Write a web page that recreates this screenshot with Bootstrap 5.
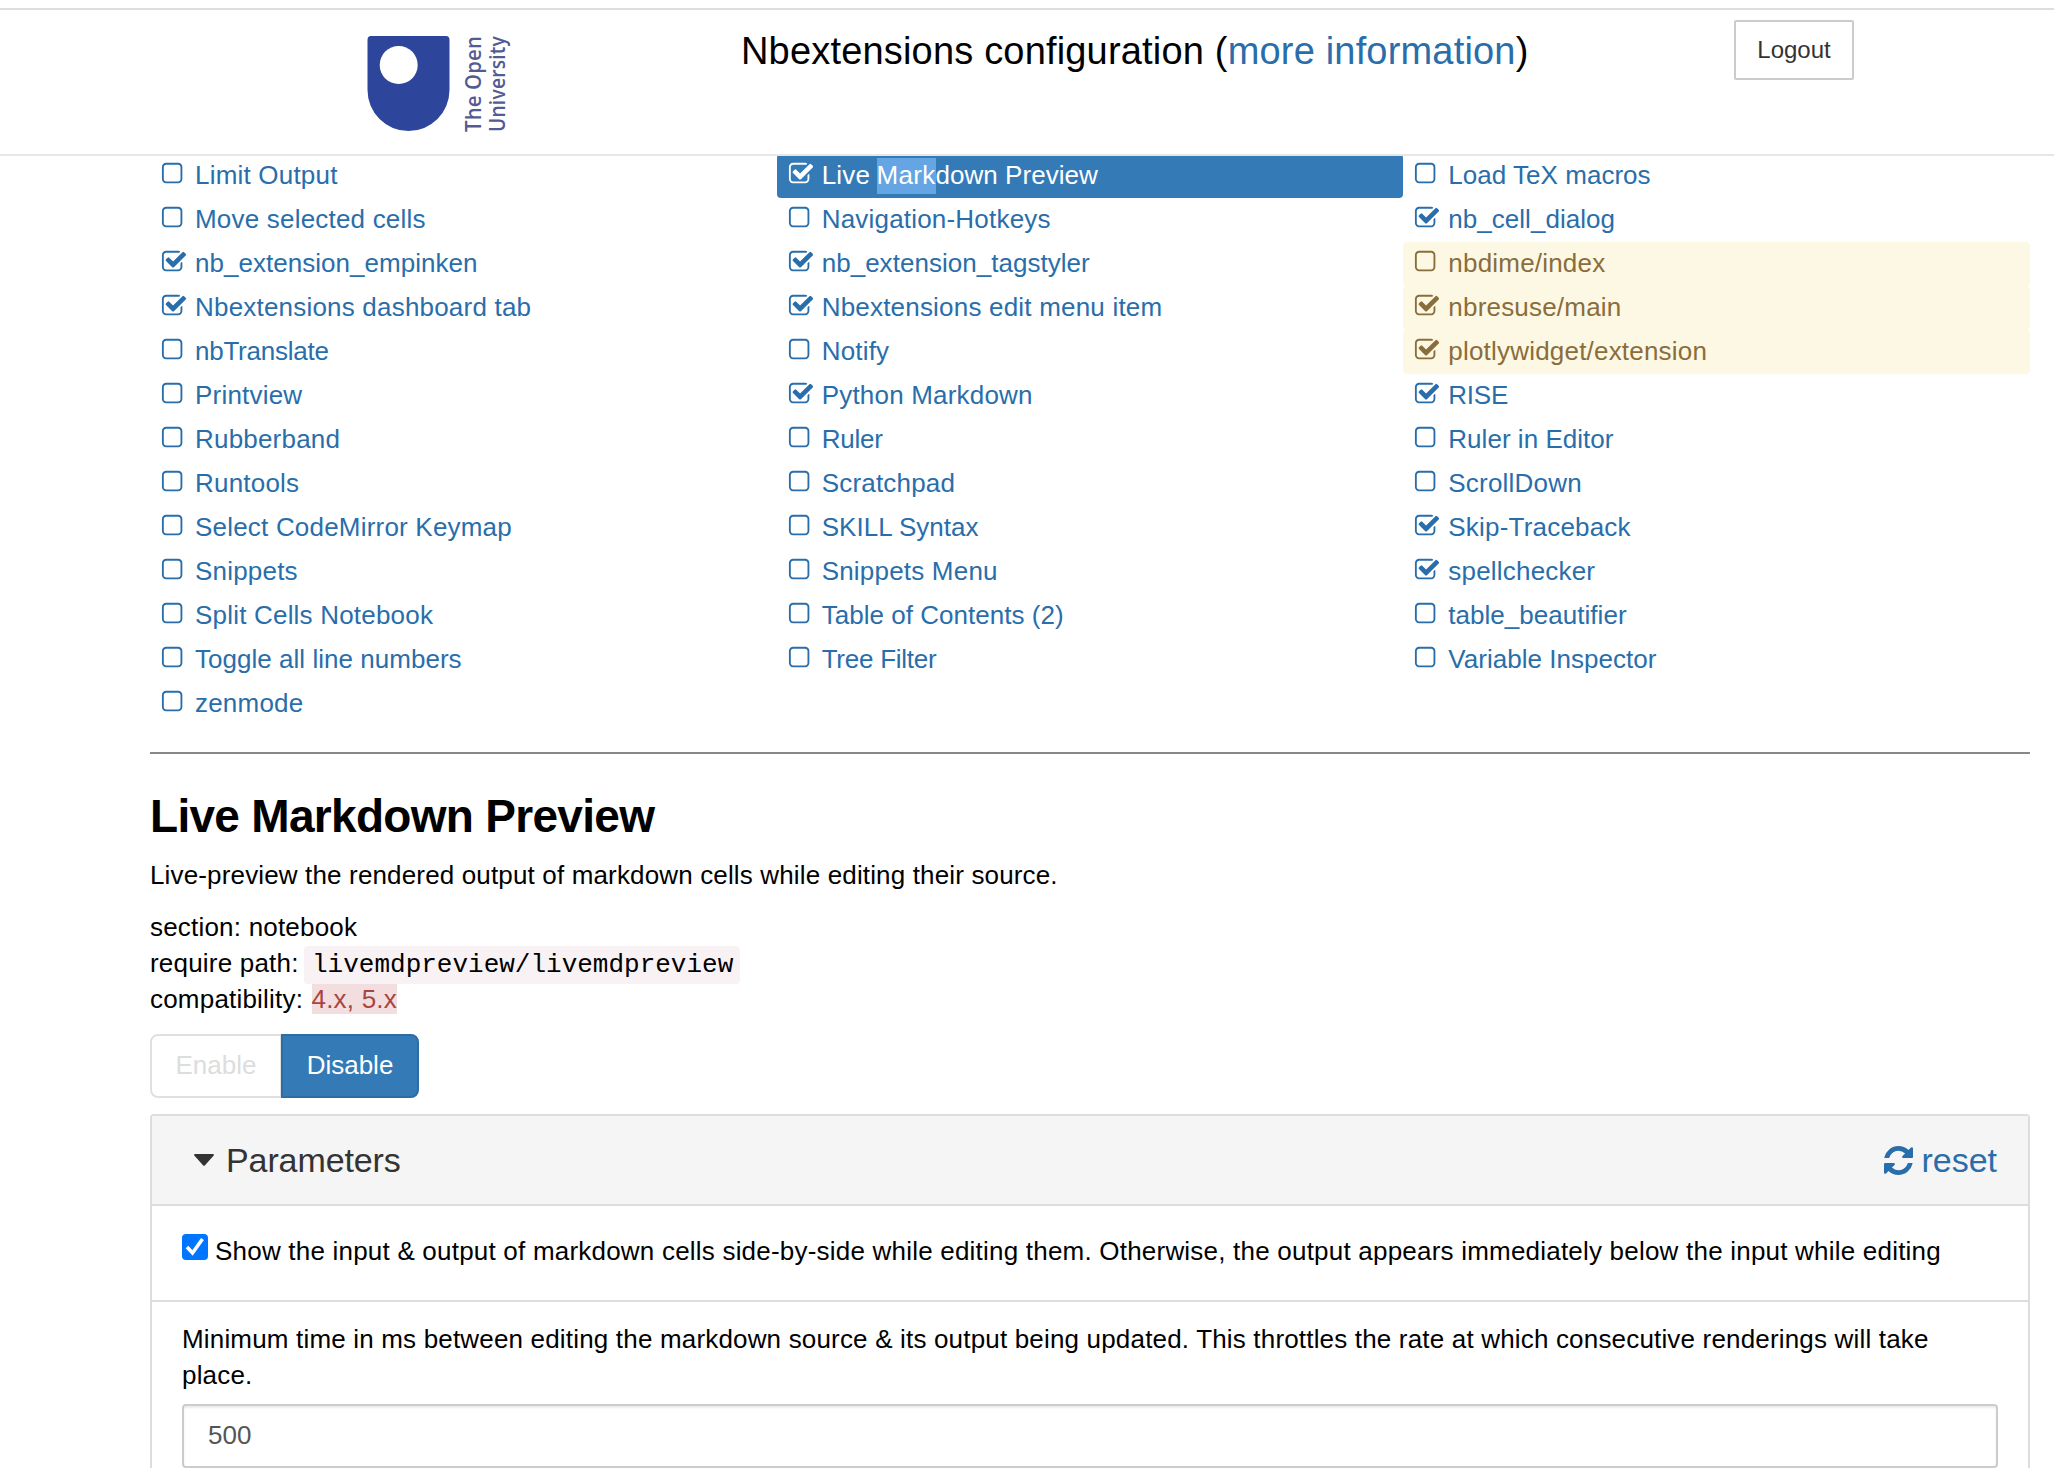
<!DOCTYPE html>
<html lang="en">
<head>
<meta charset="utf-8">
<title>Nbextensions configuration</title>
<link rel="stylesheet" href="https://cdn.jsdelivr.net/npm/bootstrap@5.3.0/dist/css/bootstrap.min.css">
<style>
body{font:26px/36px "Liberation Sans",Arial,sans-serif;color:#000;background:#fff;letter-spacing:.2px;height:1468px;overflow:hidden}
a{color:#296eaa;text-decoration:none}
.site-header{height:148px;margin-top:8px;border-top:2px solid #dcdce1;border-bottom:2px solid #e7e7e7;z-index:2}
.brand-logo{margin:14px 0 0 356px;width:166px;height:120px;overflow:visible}
.page-title{font-size:38px;line-height:44px;margin:19px 0 0 219px;width:993px;font-weight:400;letter-spacing:.18px;color:#000}
.logout-btn{--bs-btn-border-color:#ccc;--bs-btn-color:#333;--bs-btn-border-radius:2px;--bs-btn-border-width:2px;width:120px;height:60px;margin-top:10px;font-size:24px;line-height:34px;padding:0 0 1px;letter-spacing:0}
.page-body{width:1880px;margin-left:150px}
.ext-list{margin-top:-2px}
.ext-link{height:44px;line-height:42px;padding-left:11px;border-radius:4px}
.ext-link svg{width:26px;height:26px;margin:7.4px 8px 0 0;fill:currentColor;flex:none}
.ext-link.active{background:#337ab7;color:#fff}
.ext-link.unconfigurable{background:#fcf8e3;color:#8a6d3b}
.snug{letter-spacing:.03px}
.snugger{letter-spacing:-.25px}
.picked{background:#66a5e3;display:inline-block;height:36px;line-height:34px;margin:4px 0 0 -1px;letter-spacing:.3px}
.divider{height:2px;background:#888;margin-top:26px}
.ext-title{font-size:46px;line-height:52px;font-weight:700;letter-spacing:-.7px;margin:36px 0 0}
.ext-desc{margin:15px 0 16px;letter-spacing:.15px}
.path-code{background:#f9f2f4;color:#000;font:26px/30px "Liberation Mono",monospace;border-radius:4px;padding:4px 7px 4px 8px;margin-left:-2px;letter-spacing:0}
.compat{background:#f2dede;color:#a94442;margin-left:1px}
.toggle-btns{margin-top:17px}
.toggle-btns .btn{font-size:26px;line-height:36px;height:64px;padding:0 0 2px;border-width:2px;letter-spacing:0}
.btn-enable,.btn-enable:disabled{width:132px;border-color:#e0e0e0;color:#ddd;opacity:1;background:#fff;border-radius:8px}
.toggle-btns .btn-disable{width:138px;margin-left:-2px;background:#337ab7;border-color:#2e6da4;color:#fff;border-radius:8px}
.params{border:2px solid #ddd;border-radius:4px 4px 0 0;margin-top:16px;height:400px}
.params-head{height:90px;background:#f5f5f5;border-bottom:2px solid #ddd;font-size:34px;line-height:40px;padding:0 31px 0 42px;color:#333;letter-spacing:0}
.params-head svg{fill:currentColor}
.params-name{margin-left:12px;letter-spacing:-.1px}
.reset-icon{margin-right:8px}
.param-check{height:96px;border-bottom:2px solid #ddd;padding:26px 30px 0}
.tick-box{width:26px;height:26px;background:#0075ff;border-radius:4px;margin:2px 7px 0 0;flex:none}
.check-text{margin-top:1px;letter-spacing:.21px}
.param-num{padding:19px 30px 0;letter-spacing:.175px}
.num-input{height:64px;border:2px solid #ccc;border-radius:4px;margin-top:11px;padding:0 24px 2px;font-size:26px;letter-spacing:0;color:#555;box-shadow:inset 0 2px 2px rgba(0,0,0,.075)}
</style>
<script src="https://cdn.jsdelivr.net/npm/bootstrap@5.3.0/dist/js/bootstrap.bundle.min.js"></script>
</head>
<body>
<svg width="0" height="0" class="position-absolute">
<symbol id="off" viewBox="128 0 1792 1792"><path d="M1312 256h-832q-66 0-113 47t-47 113v832q0 66 47 113t113 47h832q66 0 113-47t47-113v-832q0-66-47-113t-113-47zm288 160v832q0 119-84.5 203.5t-203.5 84.5h-832q-119 0-203.5-84.5t-84.5-203.5v-832q0-119 84.5-203.5t203.5-84.5h832q119 0 203.5 84.5t84.5 203.5z"/></symbol>
<symbol id="on" viewBox="0 0 1792 1792"><path d="M1472 930v318q0 119-84.5 203.5t-203.5 84.5h-832q-119 0-203.5-84.5t-84.5-203.5v-832q0-119 84.5-203.5t203.5-84.5h832q63 0 117 25 15 7 18 23 3 17-9 29l-49 49q-10 10-23 10-3 0-9-2-23-6-45-6h-832q-66 0-113 47t-47 113v832q0 66 47 113t113 47h832q66 0 113-47t47-113v-254q0-13 9-22l64-64q10-10 23-10 6 0 12 3 20 8 20 29zm231-489l-814 814q-24 24-57 24t-57-24l-430-430q-24-24-24-57t24-57l110-110q24-24 57-24t57 24l263 263 647-647q24-24 57-24t57 24l110 110q24 24 24 57t-24 57z"/></symbol>
</svg>
<header class="site-header d-flex align-items-start bg-white position-relative">
<svg class="brand-logo" viewBox="356 24 166 120">
<path fill="#2d469b" d="M371 36H446Q449.500 36 449.500 40V90A41 41 0 0 1 367.500 90V40Q367.500 36 371 36Z"/>
<circle cx="398.700" cy="65" r="19" fill="#fff"/>
<g fill="#525b94" font-family="'Open Sans',sans-serif" font-weight="600" font-size="21">
<text transform="translate(480.500 132) rotate(-90)" textLength="96" lengthAdjust="spacingAndGlyphs">The Open</text>
<text transform="translate(505 132) rotate(-90)" textLength="96" lengthAdjust="spacingAndGlyphs">University</text>
</g>
</svg>
<h1 class="page-title">Nbextensions configuration (<a href="#">more information</a>)</h1>
<button class="btn logout-btn" type="button">Logout</button>
</header>
<main class="page-body">
<nav class="ext-list row row-cols-3 g-0">
<a href="#" class="col ext-link d-flex"><svg><use href="#off"/></svg>Limit Output</a>
<a href="#" class="col ext-link d-flex active"><svg><use href="#on"/></svg><span>Live <span class="picked">Mark</span><span class="snug">down Preview</span></span></a>
<a href="#" class="col ext-link d-flex snug"><svg><use href="#off"/></svg>Load TeX macros</a>
<a href="#" class="col ext-link d-flex"><svg><use href="#off"/></svg>Move selected cells</a>
<a href="#" class="col ext-link d-flex"><svg><use href="#off"/></svg>Navigation-Hotkeys</a>
<a href="#" class="col ext-link d-flex snug"><svg><use href="#on"/></svg>nb_cell_dialog</a>
<a href="#" class="col ext-link d-flex snug"><svg><use href="#on"/></svg>nb_extension_empinken</a>
<a href="#" class="col ext-link d-flex snug"><svg><use href="#on"/></svg>nb_extension_tagstyler</a>
<a href="#" class="col ext-link d-flex unconfigurable"><svg><use href="#off"/></svg>nbdime/index</a>
<a href="#" class="col ext-link d-flex"><svg><use href="#on"/></svg>Nbextensions dashboard tab</a>
<a href="#" class="col ext-link d-flex"><svg><use href="#on"/></svg>Nbextensions edit menu item</a>
<a href="#" class="col ext-link d-flex unconfigurable"><svg><use href="#on"/></svg>nbresuse/main</a>
<a href="#" class="col ext-link d-flex snugger"><svg><use href="#off"/></svg>nbTranslate</a>
<a href="#" class="col ext-link d-flex"><svg><use href="#off"/></svg>Notify</a>
<a href="#" class="col ext-link d-flex unconfigurable"><svg><use href="#on"/></svg>plotlywidget/extension</a>
<a href="#" class="col ext-link d-flex"><svg><use href="#off"/></svg>Printview</a>
<a href="#" class="col ext-link d-flex"><svg><use href="#on"/></svg>Python Markdown</a>
<a href="#" class="col ext-link d-flex snugger"><svg><use href="#on"/></svg>RISE</a>
<a href="#" class="col ext-link d-flex"><svg><use href="#off"/></svg>Rubberband</a>
<a href="#" class="col ext-link d-flex snugger"><svg><use href="#off"/></svg>Ruler</a>
<a href="#" class="col ext-link d-flex snug"><svg><use href="#off"/></svg>Ruler in Editor</a>
<a href="#" class="col ext-link d-flex"><svg><use href="#off"/></svg>Runtools</a>
<a href="#" class="col ext-link d-flex"><svg><use href="#off"/></svg>Scratchpad</a>
<a href="#" class="col ext-link d-flex"><svg><use href="#off"/></svg>ScrollDown</a>
<a href="#" class="col ext-link d-flex"><svg><use href="#off"/></svg>Select CodeMirror Keymap</a>
<a href="#" class="col ext-link d-flex snug"><svg><use href="#off"/></svg>SKILL Syntax</a>
<a href="#" class="col ext-link d-flex"><svg><use href="#on"/></svg>Skip-Traceback</a>
<a href="#" class="col ext-link d-flex"><svg><use href="#off"/></svg>Snippets</a>
<a href="#" class="col ext-link d-flex"><svg><use href="#off"/></svg>Snippets Menu</a>
<a href="#" class="col ext-link d-flex"><svg><use href="#on"/></svg>spellchecker</a>
<a href="#" class="col ext-link d-flex"><svg><use href="#off"/></svg>Split Cells Notebook</a>
<a href="#" class="col ext-link d-flex snug"><svg><use href="#off"/></svg>Table of Contents (2)</a>
<a href="#" class="col ext-link d-flex snug"><svg><use href="#off"/></svg>table_beautifier</a>
<a href="#" class="col ext-link d-flex snug"><svg><use href="#off"/></svg>Toggle all line numbers</a>
<a href="#" class="col ext-link d-flex snugger"><svg><use href="#off"/></svg>Tree Filter</a>
<a href="#" class="col ext-link d-flex snug"><svg><use href="#off"/></svg>Variable Inspector</a>
<a href="#" class="col ext-link d-flex"><svg><use href="#off"/></svg>zenmode</a>
</nav>
<div class="divider"></div>
<h2 class="ext-title">Live Markdown Preview</h2>
<p class="ext-desc">Live-preview the rendered output of markdown cells while editing their source.</p>
<div>section: notebook</div>
<div>require path: <code class="path-code">livemdpreview/livemdpreview</code></div>
<div>compatibility: <span class="compat">4.x, 5.x</span></div>
<div class="btn-group toggle-btns">
<button class="btn btn-enable" type="button" disabled>Enable</button>
<button class="btn btn-disable" type="button">Disable</button>
</div>
<section class="params">
<div class="params-head d-flex align-items-center">
<svg width="20" height="12" viewBox="0 0 20 12"><path d="M1 0H19Q20.500.500 19.500 1.800L11 11.300Q10 12.300 9 11.300L.500 1.800Q-.500.500 1 0Z"/></svg>
<span class="params-name">Parameters</span>
<a href="#" class="ms-auto d-flex align-items-center"><svg class="reset-icon" width="29" height="29" viewBox="128 128 1536 1536"><path d="M1639 1056q0 5-1 7-64 268-268 434.500t-478 166.500q-146 0-282.500-55t-243.500-157l-129 129q-19 19-45 19t-45-19-19-45v-448q0-26 19-45t45-19h448q26 0 45 19t19 45-19 45l-137 137q71 66 161 102t187 36q134 0 250-65t186-179q11-17 53-117 8-23 30-23h192q13 0 22.500 9.500t9.500 22.500zm25-800v448q0 26-19 45t-45 19h-448q-26 0-45-19t-19-45 19-45l138-138q-148-137-349-137-134 0-250 65t-186 179q-11 17-53 117-8 23-30 23h-199q-13 0-22.500-9.500t-9.500-22.500v-7q65-268 270-434.500t480-166.500q146 0 284 55.500t245 156.500l130-129q19-19 45-19t45 19 19 45z"/></svg>reset</a>
</div>
<div class="param-check d-flex align-items-start">
<span class="tick-box d-flex"><svg width="26" height="26" viewBox="0 0 26 26"><path d="M5 13L10.500 19L20.500 5" fill="none" stroke="#fff" stroke-width="3.600"/></svg></span>
<span class="check-text text-nowrap">Show the input &amp; output of markdown cells side-by-side while editing them. Otherwise, the output appears immediately below the input while editing</span>
</div>
<div class="param-num">
<div>Minimum time in ms between editing the markdown source &amp; its output being updated. This throttles the rate at which consecutive renderings will take<br>place.</div>
<input class="num-input form-control" type="text" value="500">
</div>
</section>
</main>
</body>
</html>
